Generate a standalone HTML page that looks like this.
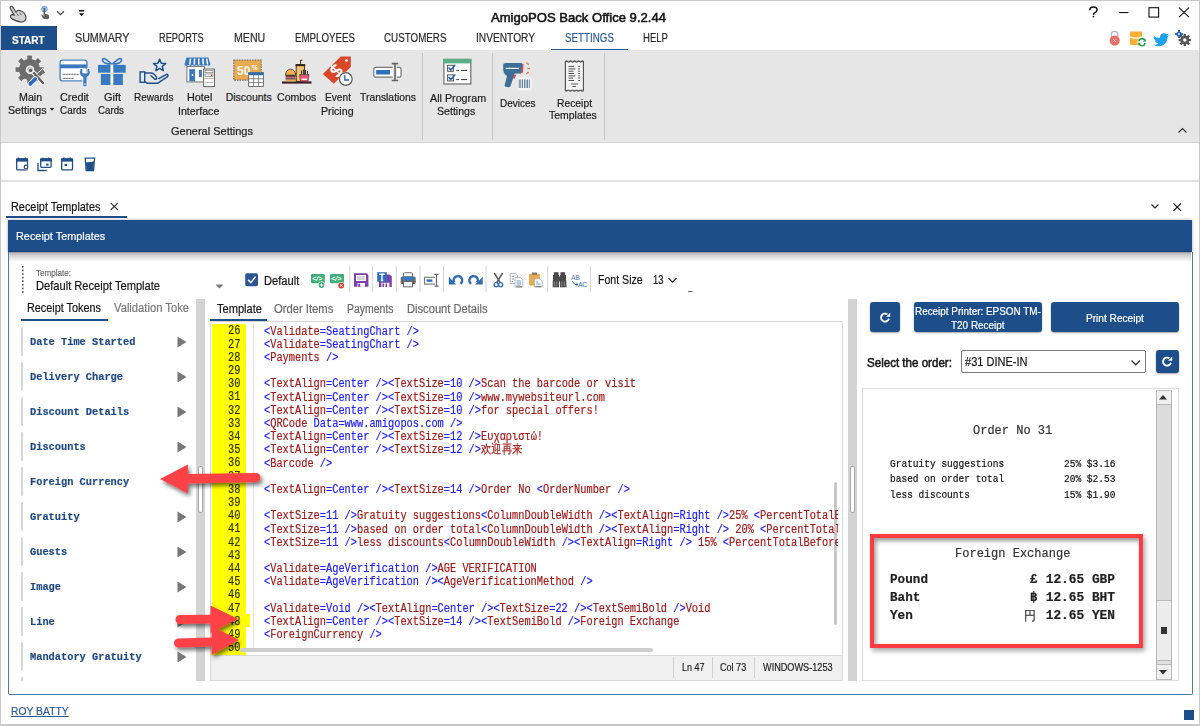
<!DOCTYPE html>
<html><head><meta charset="utf-8"><title>AmigoPOS Back Office</title>
<style>
html,body{margin:0;padding:0;}
body{width:1200px;height:726px;position:relative;overflow:hidden;background:#fff;font-family:"Liberation Sans", sans-serif;}
.t{position:absolute;white-space:pre;transform-origin:0 0;-webkit-text-stroke:0.2px currentColor;}
svg{overflow:visible}
</style></head><body>
<div style="position:absolute;left:0px;top:0px;width:1200px;height:726px;background:#fff"></div>
<div style="position:absolute;left:1px;top:26px;width:56px;height:24px;background:#1e4e89"></div>
<div style="position:absolute;left:551px;top:48.6px;width:77px;height:1.6px;background:#2b5a96"></div>
<div style="position:absolute;left:1px;top:50px;width:1198px;height:92px;background:#e6e6e6"></div>
<div style="position:absolute;left:1px;top:142px;width:1198px;height:1px;background:#d4d4d4"></div>
<div style="position:absolute;left:422px;top:53px;width:1px;height:87px;background:#c9c9c9"></div>
<div style="position:absolute;left:492px;top:53px;width:1px;height:87px;background:#c9c9c9"></div>
<div style="position:absolute;left:604px;top:53px;width:1px;height:87px;background:#c9c9c9"></div>
<div style="position:absolute;left:1px;top:180px;width:1198px;height:2px;background:#e2e2e2"></div>
<div style="position:absolute;left:6px;top:216px;width:121px;height:2px;background:#1e4e89"></div>
<div style="position:absolute;left:8px;top:220px;width:1184px;height:32px;background:#1e4e89;box-shadow:-1px 0 3px rgba(0,0,0,0.18), 1px 0 3px rgba(0,0,0,0.18);border-bottom:1px solid #0f4080;box-sizing:border-box"></div>
<div style="position:absolute;left:9px;top:252px;width:1182px;height:9.5px;background:linear-gradient(rgba(0,0,0,0.28), rgba(0,0,0,0.13) 50%, rgba(0,0,0,0))"></div>
<div style="position:absolute;left:7.5px;top:252px;width:1185px;height:442.5px;border:1.5px solid #4f78ad;border-top:none;box-sizing:border-box;border-radius:0 0 2px 2px"></div>
<div style="position:absolute;left:21px;top:319px;width:87px;height:2px;background:#1e4e89"></div>
<div style="position:absolute;left:196px;top:299px;width:9px;height:382px;background:#d3d3d3"></div>
<div style="position:absolute;left:197.6px;top:466px;width:5px;height:47px;background:#fff;border:1px solid #a8a8a8;border-radius:2px;box-sizing:border-box"></div>
<div style="position:absolute;left:21px;top:327px;width:1.5px;height:29px;background:#d6d6d6;border-radius:1px"></div>
<svg style="position:absolute;left:177px;top:336px;" width="10" height="12" viewBox="0 0 10 12"><path d="M0.5 0.5 L9.5 6 L0.5 11.5 Z" fill="#777"/></svg>
<div style="position:absolute;left:21px;top:362px;width:1.5px;height:29px;background:#d6d6d6;border-radius:1px"></div>
<svg style="position:absolute;left:177px;top:371px;" width="10" height="12" viewBox="0 0 10 12"><path d="M0.5 0.5 L9.5 6 L0.5 11.5 Z" fill="#777"/></svg>
<div style="position:absolute;left:21px;top:397px;width:1.5px;height:29px;background:#d6d6d6;border-radius:1px"></div>
<svg style="position:absolute;left:177px;top:406px;" width="10" height="12" viewBox="0 0 10 12"><path d="M0.5 0.5 L9.5 6 L0.5 11.5 Z" fill="#777"/></svg>
<div style="position:absolute;left:21px;top:432px;width:1.5px;height:29px;background:#d6d6d6;border-radius:1px"></div>
<svg style="position:absolute;left:177px;top:441px;" width="10" height="12" viewBox="0 0 10 12"><path d="M0.5 0.5 L9.5 6 L0.5 11.5 Z" fill="#777"/></svg>
<div style="position:absolute;left:21px;top:467px;width:1.5px;height:29px;background:#d6d6d6;border-radius:1px"></div>
<svg style="position:absolute;left:177px;top:476px;" width="10" height="12" viewBox="0 0 10 12"><path d="M0.5 0.5 L9.5 6 L0.5 11.5 Z" fill="#777"/></svg>
<div style="position:absolute;left:21px;top:502px;width:1.5px;height:29px;background:#d6d6d6;border-radius:1px"></div>
<svg style="position:absolute;left:177px;top:511px;" width="10" height="12" viewBox="0 0 10 12"><path d="M0.5 0.5 L9.5 6 L0.5 11.5 Z" fill="#777"/></svg>
<div style="position:absolute;left:21px;top:537px;width:1.5px;height:29px;background:#d6d6d6;border-radius:1px"></div>
<svg style="position:absolute;left:177px;top:546px;" width="10" height="12" viewBox="0 0 10 12"><path d="M0.5 0.5 L9.5 6 L0.5 11.5 Z" fill="#777"/></svg>
<div style="position:absolute;left:21px;top:572px;width:1.5px;height:29px;background:#d6d6d6;border-radius:1px"></div>
<svg style="position:absolute;left:177px;top:581px;" width="10" height="12" viewBox="0 0 10 12"><path d="M0.5 0.5 L9.5 6 L0.5 11.5 Z" fill="#777"/></svg>
<div style="position:absolute;left:21px;top:607px;width:1.5px;height:29px;background:#d6d6d6;border-radius:1px"></div>
<svg style="position:absolute;left:177px;top:616px;" width="10" height="12" viewBox="0 0 10 12"><path d="M0.5 0.5 L9.5 6 L0.5 11.5 Z" fill="#777"/></svg>
<div style="position:absolute;left:21px;top:642px;width:1.5px;height:29px;background:#d6d6d6;border-radius:1px"></div>
<svg style="position:absolute;left:177px;top:651px;" width="10" height="12" viewBox="0 0 10 12"><path d="M0.5 0.5 L9.5 6 L0.5 11.5 Z" fill="#777"/></svg>
<div style="position:absolute;left:21px;top:677px;width:1.5px;height:4px;background:#d6d6d6"></div>
<div style="position:absolute;left:210px;top:321px;width:632px;height:1px;background:#d6d6d6"></div>
<div style="position:absolute;left:210px;top:319px;width:57px;height:2px;background:#1e4e89"></div>
<div style="position:absolute;left:210px;top:321px;width:633px;height:360px;border:1px solid #dadada;border-top:none;box-sizing:border-box"></div>
<div style="position:absolute;left:212px;top:324px;width:34px;height:331px;background:#ffff00"></div>
<div style="position:absolute;left:246px;top:614px;width:4px;height:13px;background:#ffff00"></div>
<div style="position:absolute;left:253px;top:324px;width:1px;height:326px;background:#e3e3e3"></div>
<div style="position:absolute;left:211px;top:655px;width:631px;height:25px;background:#f0f0f0;border-top:1px solid #d8d8d8;box-sizing:border-box"></div>
<div style="position:absolute;left:673px;top:657px;width:1px;height:21px;background:#cfcfcf"></div>
<div style="position:absolute;left:712px;top:657px;width:1px;height:21px;background:#cfcfcf"></div>
<div style="position:absolute;left:754px;top:657px;width:1px;height:21px;background:#cfcfcf"></div>
<div style="position:absolute;left:833.5px;top:482px;width:3.3px;height:143px;background:#c8c8c8;border-radius:2px"></div>
<div style="position:absolute;left:240px;top:648px;width:413px;height:4px;background:#cdcdcd;border-radius:2px"></div>
<div style="position:absolute;left:264px;top:321px;width:574px;height:328px;overflow:hidden;font-family:&quot;Liberation Mono&quot;, monospace"><div class="t" style="left:0;top:4.51px;font-size:12px;line-height:12px;transform:scaleX(0.8610)"><span style="color:#2121ff">&lt;</span><span style="color:#a31a1a">Validate</span><span style="color:#2121ff">=SeatingChart /&gt;</span></div><div class="t" style="left:0;top:17.71px;font-size:12px;line-height:12px;transform:scaleX(0.8610)"><span style="color:#2121ff">&lt;</span><span style="color:#a31a1a">Validate</span><span style="color:#2121ff">=SeatingChart /&gt;</span></div><div class="t" style="left:0;top:30.91px;font-size:12px;line-height:12px;transform:scaleX(0.8610)"><span style="color:#2121ff">&lt;</span><span style="color:#a31a1a">Payments</span><span style="color:#2121ff"> /&gt;</span></div><div class="t" style="left:0;top:44.11px;font-size:12px;line-height:12px;transform:scaleX(0.8610)"></div><div class="t" style="left:0;top:57.31px;font-size:12px;line-height:12px;transform:scaleX(0.8610)"><span style="color:#2121ff">&lt;</span><span style="color:#a31a1a">TextAlign</span><span style="color:#2121ff">=Center /&gt;</span><span style="color:#2121ff">&lt;</span><span style="color:#a31a1a">TextSize</span><span style="color:#2121ff">=10 /&gt;</span><span style="color:#a31a1a">Scan the barcode or visit</span></div><div class="t" style="left:0;top:70.51px;font-size:12px;line-height:12px;transform:scaleX(0.8610)"><span style="color:#2121ff">&lt;</span><span style="color:#a31a1a">TextAlign</span><span style="color:#2121ff">=Center /&gt;</span><span style="color:#2121ff">&lt;</span><span style="color:#a31a1a">TextSize</span><span style="color:#2121ff">=10 /&gt;</span><span style="color:#a31a1a">www.mywebsiteurl.com</span></div><div class="t" style="left:0;top:83.71px;font-size:12px;line-height:12px;transform:scaleX(0.8610)"><span style="color:#2121ff">&lt;</span><span style="color:#a31a1a">TextAlign</span><span style="color:#2121ff">=Center /&gt;</span><span style="color:#2121ff">&lt;</span><span style="color:#a31a1a">TextSize</span><span style="color:#2121ff">=10 /&gt;</span><span style="color:#a31a1a">for special offers!</span></div><div class="t" style="left:0;top:96.91px;font-size:12px;line-height:12px;transform:scaleX(0.8610)"><span style="color:#2121ff">&lt;</span><span style="color:#a31a1a">QRCode</span><span style="color:#2121ff"> Data=www.amigopos.com /&gt;</span></div><div class="t" style="left:0;top:110.11px;font-size:12px;line-height:12px;transform:scaleX(0.8610)"><span style="color:#2121ff">&lt;</span><span style="color:#a31a1a">TextAlign</span><span style="color:#2121ff">=Center /&gt;</span><span style="color:#2121ff">&lt;</span><span style="color:#a31a1a">TextSize</span><span style="color:#2121ff">=12 /&gt;</span><span style="color:#a31a1a">Ευχαριστώ!</span></div><div class="t" style="left:0;top:123.31px;font-size:12px;line-height:12px;transform:scaleX(0.8610)"><span style="color:#2121ff">&lt;</span><span style="color:#a31a1a">TextAlign</span><span style="color:#2121ff">=Center /&gt;</span><span style="color:#2121ff">&lt;</span><span style="color:#a31a1a">TextSize</span><span style="color:#2121ff">=12 /&gt;</span><span style="color:#a31a1a">欢迎再来</span></div><div class="t" style="left:0;top:136.51px;font-size:12px;line-height:12px;transform:scaleX(0.8610)"><span style="color:#2121ff">&lt;</span><span style="color:#a31a1a">Barcode</span><span style="color:#2121ff"> /&gt;</span></div><div class="t" style="left:0;top:149.71px;font-size:12px;line-height:12px;transform:scaleX(0.8610)"></div><div class="t" style="left:0;top:162.91px;font-size:12px;line-height:12px;transform:scaleX(0.8610)"><span style="color:#2121ff">&lt;</span><span style="color:#a31a1a">TextAlign</span><span style="color:#2121ff">=Center /&gt;</span><span style="color:#2121ff">&lt;</span><span style="color:#a31a1a">TextSize</span><span style="color:#2121ff">=14 /&gt;</span><span style="color:#a31a1a">Order No </span><span style="color:#2121ff">&lt;</span><span style="color:#a31a1a">OrderNumber</span><span style="color:#2121ff"> /&gt;</span></div><div class="t" style="left:0;top:176.11px;font-size:12px;line-height:12px;transform:scaleX(0.8610)"></div><div class="t" style="left:0;top:189.31px;font-size:12px;line-height:12px;transform:scaleX(0.8610)"><span style="color:#2121ff">&lt;</span><span style="color:#a31a1a">TextSize</span><span style="color:#2121ff">=11 /&gt;</span><span style="color:#a31a1a">Gratuity suggestions</span><span style="color:#2121ff">&lt;</span><span style="color:#a31a1a">ColumnDoubleWidth</span><span style="color:#2121ff"> /&gt;</span><span style="color:#2121ff">&lt;</span><span style="color:#a31a1a">TextAlign</span><span style="color:#2121ff">=Right /&gt;</span><span style="color:#a31a1a">25% </span><span style="color:#2121ff">&lt;</span><span style="color:#a31a1a">PercentTotalBefore</span><span style="color:#2121ff"></span></div><div class="t" style="left:0;top:202.51px;font-size:12px;line-height:12px;transform:scaleX(0.8610)"><span style="color:#2121ff">&lt;</span><span style="color:#a31a1a">TextSize</span><span style="color:#2121ff">=11 /&gt;</span><span style="color:#a31a1a">based on order total</span><span style="color:#2121ff">&lt;</span><span style="color:#a31a1a">ColumnDoubleWidth</span><span style="color:#2121ff"> /&gt;</span><span style="color:#2121ff">&lt;</span><span style="color:#a31a1a">TextAlign</span><span style="color:#2121ff">=Right /&gt;</span><span style="color:#a31a1a"> 20% </span><span style="color:#2121ff">&lt;</span><span style="color:#a31a1a">PercentTotalBefore</span><span style="color:#2121ff"></span></div><div class="t" style="left:0;top:215.71px;font-size:12px;line-height:12px;transform:scaleX(0.8610)"><span style="color:#2121ff">&lt;</span><span style="color:#a31a1a">TextSize</span><span style="color:#2121ff">=11 /&gt;</span><span style="color:#a31a1a">less discounts</span><span style="color:#2121ff">&lt;</span><span style="color:#a31a1a">ColumnDoubleWidth</span><span style="color:#2121ff"> /&gt;</span><span style="color:#2121ff">&lt;</span><span style="color:#a31a1a">TextAlign</span><span style="color:#2121ff">=Right /&gt;</span><span style="color:#a31a1a"> 15% </span><span style="color:#2121ff">&lt;</span><span style="color:#a31a1a">PercentTotalBefore</span><span style="color:#2121ff"></span></div><div class="t" style="left:0;top:228.91px;font-size:12px;line-height:12px;transform:scaleX(0.8610)"></div><div class="t" style="left:0;top:242.11px;font-size:12px;line-height:12px;transform:scaleX(0.8610)"><span style="color:#2121ff">&lt;</span><span style="color:#a31a1a">Validate</span><span style="color:#2121ff">=AgeVerification /&gt;</span><span style="color:#a31a1a">AGE VERIFICATION</span></div><div class="t" style="left:0;top:255.31px;font-size:12px;line-height:12px;transform:scaleX(0.8610)"><span style="color:#2121ff">&lt;</span><span style="color:#a31a1a">Validate</span><span style="color:#2121ff">=AgeVerification /&gt;</span><span style="color:#2121ff">&lt;</span><span style="color:#a31a1a">AgeVerificationMethod</span><span style="color:#2121ff"> /&gt;</span></div><div class="t" style="left:0;top:268.51px;font-size:12px;line-height:12px;transform:scaleX(0.8610)"></div><div class="t" style="left:0;top:281.71px;font-size:12px;line-height:12px;transform:scaleX(0.8610)"><span style="color:#2121ff">&lt;</span><span style="color:#a31a1a">Validate</span><span style="color:#2121ff">=Void /&gt;</span><span style="color:#2121ff">&lt;</span><span style="color:#a31a1a">TextAlign</span><span style="color:#2121ff">=Center /&gt;</span><span style="color:#2121ff">&lt;</span><span style="color:#a31a1a">TextSize</span><span style="color:#2121ff">=22 /&gt;</span><span style="color:#2121ff">&lt;</span><span style="color:#a31a1a">TextSemiBold</span><span style="color:#2121ff"> /&gt;</span><span style="color:#a31a1a">Void</span></div><div class="t" style="left:0;top:294.91px;font-size:12px;line-height:12px;transform:scaleX(0.8610)"><span style="color:#2121ff">&lt;</span><span style="color:#a31a1a">TextAlign</span><span style="color:#2121ff">=Center /&gt;</span><span style="color:#2121ff">&lt;</span><span style="color:#a31a1a">TextSize</span><span style="color:#2121ff">=14 /&gt;</span><span style="color:#2121ff">&lt;</span><span style="color:#a31a1a">TextSemiBold</span><span style="color:#2121ff"> /&gt;</span><span style="color:#a31a1a">Foreign Exchange</span></div><div class="t" style="left:0;top:308.11px;font-size:12px;line-height:12px;transform:scaleX(0.8610)"><span style="color:#2121ff">&lt;</span><span style="color:#a31a1a">ForeignCurrency</span><span style="color:#2121ff"> /&gt;</span></div><div class="t" style="left:0;top:321.31px;font-size:12px;line-height:12px;transform:scaleX(0.8610)"></div></div>
<div style="position:absolute;left:848px;top:299px;width:9px;height:382px;background:#d3d3d3"></div>
<div style="position:absolute;left:849.5px;top:466px;width:5px;height:47px;background:#fff;border:1px solid #a8a8a8;border-radius:2px;box-sizing:border-box"></div>
<div style="position:absolute;left:870px;top:302px;width:30px;height:30px;background:#1e4e89;border-radius:3px;box-shadow:0 1px 2px rgba(0,0,0,0.35)"></div>
<div style="position:absolute;left:914px;top:302px;width:128px;height:30px;background:#1e4e89;border-radius:3px;box-shadow:0 1px 2px rgba(0,0,0,0.35)"></div>
<div style="position:absolute;left:1051px;top:302px;width:128px;height:30px;background:#1e4e89;border-radius:3px;box-shadow:0 1px 2px rgba(0,0,0,0.35)"></div>
<div style="position:absolute;left:961px;top:350px;width:185px;height:23px;background:#fff;border:1px solid #7a7a7a;box-sizing:border-box;border-radius:2px"></div>
<svg style="position:absolute;left:1131px;top:360px;" width="10" height="6" viewBox="0 0 10 6"><path d="M0.5 0.5 L4.75 4.75 L9 0.5" fill="none" stroke="#333" stroke-width="1.3"/></svg>
<div style="position:absolute;left:1156px;top:350px;width:23px;height:23px;background:#1e4e89;border-radius:3px;box-shadow:0 1px 2px rgba(0,0,0,0.35)"></div>
<div style="position:absolute;left:862px;top:388px;width:317px;height:293px;border:1px solid #dcdcdc;box-sizing:border-box;background:#fff"></div>
<div style="position:absolute;left:1156px;top:390px;width:16px;height:290px;background:#dcdcdc;border:1px solid #b9b9b9;box-sizing:border-box"></div>
<div style="position:absolute;left:1156px;top:390px;width:16px;height:15px;background:#f0f0f0;border:1px solid #b9b9b9;box-sizing:border-box"></div>
<svg style="position:absolute;left:1159px;top:395px;" width="8" height="5" viewBox="0 0 8 5"><path d="M0 4.5 L4 0 L8 4.5 Z" fill="#333"/></svg>
<div style="position:absolute;left:1156px;top:600px;width:16px;height:61px;background:#ececec;border:1px solid #b9b9b9;box-sizing:border-box"></div>
<div style="position:absolute;left:1161px;top:627px;width:6px;height:7px;background:#333"></div>
<div style="position:absolute;left:1156px;top:660px;width:16px;height:5px;background:#e0e0e0;border:1px solid #b9b9b9;box-sizing:border-box"></div>
<div style="position:absolute;left:1156px;top:664px;width:16px;height:16px;background:#f0f0f0;border:1px solid #b9b9b9;box-sizing:border-box"></div>
<svg style="position:absolute;left:1159px;top:670px;" width="8" height="5" viewBox="0 0 8 5"><path d="M0 0 L4 4.5 L8 0 Z" fill="#333"/></svg>
<div style="position:absolute;left:870px;top:534px;width:273px;height:114px;border:4px solid #fd3b40;box-sizing:border-box;box-shadow:2px 3px 5px rgba(0,0,0,0.35), inset 2px 3px 4px rgba(0,0,0,0.4)"></div>
<div style="position:absolute;left:1184px;top:710px;width:10px;height:10px;background:#1e4e89"></div>
<svg style="position:absolute;left:5px;top:2px;" width="30" height="24" viewBox="0 0 30 24">
<path d="M5.2 6.2 C4.8 4.4 6.8 3.6 7.8 5 L11 10.2 C11.8 8.7 13.6 8.1 15.6 8.7 C18.2 9.5 20.2 11.8 20.9 14.9 C21.5 17.9 19.5 20.1 16.2 20.1 C13 19.9 10 18.5 7.1 16.9 C5 15.9 4.8 13.6 6.4 12.9 C7.5 12.4 8.6 12.8 9.3 13.4 Z" fill="#d2d2d2" stroke="#484848" stroke-width="1.2" stroke-linejoin="round"/>
<path d="M11.8 11.6 L13.6 14 M14.6 10.6 L16.4 13.2" stroke="#555" stroke-width="0.9"/></svg>
<svg style="position:absolute;left:35px;top:2px;" width="55" height="24" viewBox="0 0 55 24">
<circle cx="9.4" cy="7" r="2.9" fill="#9cc3ea" stroke="#6aa2dc" stroke-width="0.8"/>
<path d="M9.4 6.5 V13" stroke="#555" stroke-width="1.6" stroke-linecap="round"/>
<path d="M6 12.3 L9.4 14 V12 C11 11.6 13.5 12.2 14 13.5 C14.6 15.5 14 17 12.6 17.2 L9.5 17 C8.2 16.5 7 15 6 12.3 Z" fill="#626262"/>
<path d="M22 9.3 L25.5 12.7 L29 9.3" fill="none" stroke="#444" stroke-width="1.2"/>
<rect x="44" y="8" width="5.2" height="1.6" fill="#222"/>
<path d="M44 11.3 H49.2 L46.6 14.3 Z" fill="#111"/></svg>
<svg style="position:absolute;left:1085px;top:4px;" width="112" height="18" viewBox="0 0 112 18">
<path d="M4.8 6.2 C4.8 3.8 6.5 3 8.4 3 C10.5 3 12 4.2 12 6 C12 7.6 10.8 8.3 9.6 8.9 C8.7 9.4 8.5 9.9 8.5 10.9" fill="none" stroke="#111" stroke-width="1.5"/>
<circle cx="8.5" cy="12.6" r="0.95" fill="#111"/>
<rect x="33.8" y="8" width="9.5" height="1.1" fill="#111"/>
<rect x="64" y="3.7" width="9.6" height="9.4" fill="none" stroke="#111" stroke-width="1.1"/>
<path d="M94 3.7 L104 13.2 M104 3.7 L94 13.2" stroke="#111" stroke-width="1.1"/></svg>
<svg style="position:absolute;left:1105px;top:28px;" width="95" height="20" viewBox="0 0 95 20">
<path d="M6.4 9 V5.7 C6.4 3.8 7.8 3.4 9.6 3.4 C11.4 3.4 12.8 3.8 12.8 5.7 V9" fill="none" stroke="#b9b9b9" stroke-width="1.3"/>
<circle cx="9.7" cy="12.6" r="5.1" fill="#ea6f68"/>
<path d="M8.2 11.1 L11.2 14.1 M11.2 11.1 L8.2 14.1" stroke="#fbd3d0" stroke-width="0.9"/>
<path d="M25 3.4 H37 V9 C34 10.5 28 10.5 25 9 Z" fill="#fbb033"/>
<path d="M25 9.8 C28 11.2 34 11.2 37 9.8 V17 H25 Z" fill="#fbb033"/>
<path d="M25.2 8.7 C28.6 10.2 33.6 10.2 36.8 8.7" stroke="#fff" stroke-width="0.8" fill="none"/>
<circle cx="37" cy="14.2" r="4.6" fill="#fff"/>
<path d="M34 13.4 A3 3 0 0 1 39.8 12.6 M40 15 A3 3 0 0 1 34.2 15.8" fill="none" stroke="#1a9c4a" stroke-width="1.6"/>
<path d="M40.8 10.8 V13.6 H38 Z M33.2 17.6 V14.8 H36 Z" fill="#1a9c4a"/>
<path d="M48.5 7.5 C50.5 9.2 52.5 10 55 10 C54.6 7.5 56.5 5.3 58.8 5.3 C60 5.3 60.9 5.8 61.6 6.5 C62.5 6.3 63.2 6 63.8 5.6 C63.5 6.5 63 7.2 62.3 7.7 C63 7.6 63.6 7.4 64.2 7.2 C63.7 7.9 63.2 8.4 62.6 8.9 C62.7 13.8 59 18.2 53.5 18.2 C51.5 18.2 49.7 17.6 48.3 16.7 C50.3 16.8 52 16.3 53.3 15.2 C51.5 15.1 50.3 14.2 49.8 12.8 C50.4 12.9 51 12.9 51.5 12.7 C49.8 12.2 48.6 10.8 48.6 9 C49.2 9.3 49.7 9.4 50.3 9.5 C49.2 8.8 48.5 7.9 48.5 7.5 Z" fill="#1da1f2"/>
<g fill="#1f5fb4"><circle cx="74" cy="6" r="2.6"/><rect x="73.1" y="2" width="1.8" height="8"/><rect x="70" y="5.1" width="8" height="1.8"/></g>
<circle cx="74" cy="6" r="1" fill="#fff"/>
<g fill="#555" transform="translate(79.8 12)"><circle r="4.4"/>
<rect x="-1.2" y="-6.2" width="2.4" height="12.4"/><rect x="-6.2" y="-1.2" width="12.4" height="2.4"/>
<rect x="-1.2" y="-6.2" width="2.4" height="12.4" transform="rotate(45)"/><rect x="-6.2" y="-1.2" width="12.4" height="2.4" transform="rotate(45)"/></g>
<circle cx="79.8" cy="12" r="1.8" fill="#fff"/></svg>
<svg style="position:absolute;left:12px;top:52px;" width="40" height="40" viewBox="0 0 40 40">
<g transform="translate(17.6 17.6)" fill="#6d6d6d">
<circle r="10.6"/>
<g id="tth"><rect x="-2.3" y="-14" width="4.6" height="28"/></g>
<use href="#tth" transform="rotate(45)"/><use href="#tth" transform="rotate(90)"/><use href="#tth" transform="rotate(135)"/>
</g>

<path d="M19 18 L31 31" stroke="#fff" stroke-width="4.4" stroke-linecap="round"/>
<path d="M19 18 L31 31" stroke="#5d5d5d" stroke-width="2.4" stroke-linecap="round"/>
<circle cx="18" cy="17.8" r="3.6" fill="#c9c9c9" stroke="#fff" stroke-width="1.3"/><circle cx="18.6" cy="18.4" r="1.6" fill="#5d5d5d"/>
<path d="M24.5 22 L31 16.5 L33.5 20.5 L28.5 24.5" fill="#6d6d6d" stroke="#fff" stroke-width="0.9"/>
<path d="M18.3 32 L23.3 27" stroke="#fff" stroke-width="5.4" stroke-linecap="round"/>
<path d="M18.3 32 L23.3 27" stroke="#2a6cc0" stroke-width="3.8" stroke-linecap="round"/></svg>
<svg style="position:absolute;left:55px;top:52px;" width="40" height="40" viewBox="0 0 40 40">
<rect x="5.1" y="8.1" width="26.8" height="20.8" rx="2.4" fill="#fff" stroke="#4c86c6" stroke-width="1.4"/>
<rect x="5.1" y="12.4" width="26.8" height="3.9" fill="#3c79bf"/>
<path d="M7.5 22.3 H24 M7.5 26.4 H19" stroke="#555" stroke-width="1" stroke-dasharray="1.2 0.4"/>
<path d="M25 18 A5.2 5.2 0 0 0 27.8 25.2 V34.8 H32 V25.2 A5.2 5.2 0 0 0 34.8 18 V16.4 H32 V21 H27.8 V16.4 H25 Z" fill="#3c79bf" stroke="#fff" stroke-width="0.9"/>
<rect x="29.3" y="31.4" width="1.3" height="1.3" fill="#fff"/></svg>
<svg style="position:absolute;left:92px;top:52px;" width="40" height="40" viewBox="0 0 40 40">
<path d="M19.8 12.2 C16 8.5 11 4.5 10.5 7.5 C10 10.5 14.5 12.3 19.8 12.2 Z M20.2 12.2 C24 8.5 29 4.5 29.5 7.5 C30 10.5 25.5 12.3 20.2 12.2 Z" fill="none" stroke="#3a78bf" stroke-width="1.6"/>
<rect x="6" y="12.9" width="27.7" height="7.8" fill="#3a78bf"/>
<rect x="8.8" y="22" width="22.1" height="11" fill="#3a78bf"/>
<rect x="18.5" y="12.5" width="2.8" height="21" fill="#fff"/></svg>
<svg style="position:absolute;left:134px;top:52px;" width="40" height="40" viewBox="0 0 40 40">
<path d="M25.6 7.2 L27.3 11.2 L31.6 11.6 L28.3 14.4 L29.3 18.6 L25.6 16.4 L21.9 18.6 L22.9 14.4 L19.6 11.6 L23.9 11.2 Z" fill="#d8ecfb" stroke="#1f4e89" stroke-width="1.5" stroke-linejoin="round"/>
<rect x="6.1" y="19.9" width="4.6" height="10.4" fill="#d8ecfb" stroke="#1f4e89" stroke-width="1.4"/>
<path d="M10.8 21 H17 C19 21 21.5 23.5 22.6 25.5 C23.2 26.8 21.6 27.8 20.4 26.8 L17 23.8" fill="none" stroke="#1f4e89" stroke-width="1.5" stroke-linecap="round" stroke-linejoin="round"/>
<path d="M10.8 29.5 L13.5 31.3 H23.5 L33.6 24.6 C34.6 23.6 33.6 21.8 32 22.6 L24.8 26.6" fill="none" stroke="#1f4e89" stroke-width="1.5" stroke-linecap="round" stroke-linejoin="round"/></svg>
<svg style="position:absolute;left:180px;top:52px;" width="40" height="40" viewBox="0 0 40 40">
<rect x="6.9" y="14.5" width="17.5" height="15.4" fill="#fff" stroke="#777" stroke-width="1"/>
<rect x="9.3" y="17.2" width="5.7" height="12" fill="#3a78bf"/><circle cx="12.6" cy="23" r="0.9" fill="#fff"/>
<rect x="19" y="18" width="2.9" height="7" fill="#3a78bf"/>
<path d="M6.5 5.5 H28.3 L30.5 12.6 C29.5 14.2 28 14.2 27 12.8 C26 14.2 24.4 14.2 23.4 12.8 C22.4 14.2 20.8 14.2 19.8 12.8 C18.8 14.2 17.2 14.2 16.2 12.8 C15.2 14.2 13.6 14.2 12.6 12.8 C11.6 14.2 10 14.2 9 12.8 C8 14.2 5.4 14.2 4.4 12.6 Z" fill="#3a78bf"/>
<path d="M10.5 6.5 L9.8 12.5 M14.6 6.5 L14.3 12.5 M18.7 6.5 L18.8 12.5 M22.8 6.5 L23.3 12.5 M26.6 6.5 L27.6 12.5" stroke="#fff" stroke-width="1.5"/>
<rect x="23.6" y="17" width="10.9" height="17.6" fill="#fff" stroke="#666" stroke-width="1"/>
<rect x="25" y="18.5" width="8" height="2.2" fill="none" stroke="#777" stroke-width="0.7"/>
<rect x="25" y="22" width="8" height="2.5" fill="none" stroke="#777" stroke-width="0.7"/><circle cx="31.5" cy="23.2" r="0.7" fill="#e02020"/>
<path d="M24.5 26.5 H33.6" stroke="#888" stroke-width="0.6"/>
<path d="M25.3 31 L26.3 30 L27.3 31 L28.3 30 L29.3 31 L30.3 30 L31.3 31 L32.3 30 L33 31" fill="none" stroke="#777" stroke-width="0.6"/></svg>
<svg style="position:absolute;left:229px;top:52px;" width="40" height="40" viewBox="0 0 40 40">
<rect x="4.8" y="8" width="27.4" height="20.1" fill="#eaaa50" stroke="#6e6e6e" stroke-width="1.1" stroke-dasharray="1.6 1"/>
<text x="8" y="22.8" font-family="Liberation Sans, sans-serif" font-weight="700" font-size="12" fill="#fff">50</text>
<text x="23" y="17.5" font-family="Liberation Sans, sans-serif" font-weight="700" font-size="6.5" fill="#fff">%</text>
<rect x="19.6" y="20.6" width="14.8" height="13.8" fill="#fff" stroke="#6e6e6e" stroke-width="1"/>
<rect x="19.6" y="20.6" width="14.8" height="2.6" fill="#2d6bb8"/>
<path d="M24.6 23 V34.4 M29.6 23 V34.4 M19.6 26.8 H34.4 M19.6 30.6 H34.4" stroke="#777" stroke-width="0.9"/></svg>
<svg style="position:absolute;left:277px;top:52px;" width="40" height="40" viewBox="0 0 40 40">
<rect x="5" y="29.4" width="29.5" height="2.2" fill="#3a1f2c"/>
<rect x="19.2" y="13.2" width="8.4" height="16.2" fill="#f2c36e" stroke="#3a2a20" stroke-width="0.9"/>
<rect x="18.6" y="12" width="9.6" height="2.2" fill="#3a2a20"/>
<path d="M23.6 12 V8.2 H25.4" fill="none" stroke="#3a2a20" stroke-width="1"/>
<path d="M8.6 23.2 C8.6 19.5 10.8 17.2 13.6 17.2 C16.4 17.2 18.6 19.5 18.6 23.2 Z" fill="#f0b050" stroke="#3a2a20" stroke-width="0.8"/>
<rect x="8.6" y="23.2" width="10" height="1.6" fill="#3a2a20"/>
<rect x="8.6" y="24.8" width="10" height="1.6" fill="#d4577a"/>
<rect x="8.6" y="26.4" width="10" height="1.2" fill="#3a2a20"/>
<rect x="8.6" y="27.6" width="10" height="1.8" fill="#e9a94e"/>
<path d="M24.5 22.5 V18.5 M26.5 22.5 V17.5 M28.5 22.5 V18 M30.5 22.5 V19" stroke="#3a3a3a" stroke-width="1.1"/>
<path d="M22.6 22.6 H32 L31 29.4 H23.6 Z" fill="#e45a7a" stroke="#3a2a20" stroke-width="0.6"/>
<rect x="24.5" y="26.6" width="5.5" height="1.4" fill="#fff"/></svg>
<svg style="position:absolute;left:318px;top:52px;" width="40" height="40" viewBox="0 0 40 40">
<path d="M4.8 22 L22.8 4.6 H32.8 V15 L15.8 31.8 Z" fill="#d9472b"/>
<circle cx="28.4" cy="8.6" r="1.4" fill="#e8f4f8"/>
<g transform="translate(18.3 18.6) rotate(-45)" fill="none" stroke="#fff" stroke-width="2.1"><path d="M3.6 -3.3 C3.2 -5.4 -3.6 -5.8 -3.6 -2.4 C-3.6 0.6 3.6 -0.5 3.6 2.8 C3.6 6 -3.2 5.8 -3.9 3.4"/><path d="M0 -7.2 V7.2" stroke-width="1.6"/></g>
<circle cx="27.8" cy="27" r="7.2" fill="#fff"/>
<circle cx="27.8" cy="27" r="6.4" fill="#fff" stroke="#555" stroke-width="1.2"/>
<path d="M26.8 23.2 V28 H31" fill="none" stroke="#1f5fb4" stroke-width="1.3"/></svg>
<svg style="position:absolute;left:367px;top:52px;" width="40" height="40" viewBox="0 0 40 40">
<rect x="6.8" y="15.3" width="27.2" height="9.8" rx="1.6" fill="#fff" stroke="#777" stroke-width="1.2"/>
<rect x="9.1" y="18" width="13.9" height="4.5" fill="#2f6fbf"/>
<rect x="25.6" y="13" width="4.2" height="14" fill="#e6e6e6"/>
<path d="M24.8 11.6 H31.2 M28 11.6 V28.5 M24.8 28.5 H31.2" stroke="#666" stroke-width="1.6"/></svg>
<svg style="position:absolute;left:437px;top:52px;" width="40" height="40" viewBox="0 0 40 40">
<rect x="6.9" y="7.4" width="26.9" height="24.6" fill="#fff" stroke="#6d6d6d" stroke-width="1.2"/>
<rect x="6.3" y="6.9" width="28" height="4.5" fill="#5aaf86"/>
<rect x="10.6" y="13.3" width="5.8" height="6" fill="none" stroke="#555" stroke-width="1"/>
<rect x="10.6" y="22.9" width="5.8" height="6" fill="none" stroke="#555" stroke-width="1"/>
<path d="M12 16 L13.8 18 L17.8 13.3 M12 25.6 L13.8 27.6 L17.8 22.9" fill="none" stroke="#1f63b8" stroke-width="1.6" stroke-linecap="round"/>
<path d="M19.3 18.4 H22 M24 18.4 H30 M19.3 27.6 H22 M24 27.6 H30" stroke="#333" stroke-width="1"/></svg>
<svg style="position:absolute;left:497px;top:55px;" width="40" height="40" viewBox="0 0 40 40">
<rect x="20.6" y="22.2" width="14" height="13.2" fill="#f4f4f4"/>
<path d="M22.3 24.5 V33 M23.8 24.5 V33 M25.5 24.5 V33 M27.5 24.5 V33 M29 24.5 V33 M30.5 24.5 V33 M32.3 24.5 V33" stroke="#58789a" stroke-width="0.9"/>
<path d="M15 20 L19.5 19.5 L17.5 23.5 L14.5 23.5 Z" fill="#e04a5a"/>
<path d="M23 8.6 L26.6 9.2 L26 17.6 L23 18.4 Z" fill="#e04a5a"/>
<path d="M6.2 10.2 C6.2 8.6 7.2 8 9 7.9 L24.2 8 C25 8 25.4 8.6 25.2 9.5 L24.3 17 C24.2 18 23.6 18.5 22.6 18.5 L17.6 18.6 L13.6 31 C13.2 32 12.4 32.4 11.5 32.2 L8.8 31.8 C7.8 31.6 7.4 30.6 7.8 29.6 L10 21 C8 20 6.2 17 6.2 15 Z" fill="#3d6e98"/>
<path d="M9.2 13.3 H21.5" stroke="#f0f0f0" stroke-width="1.3" stroke-linecap="round"/>
<path d="M29.8 8 L31.2 9.2 M31 13.5 H32.5 M29.8 18.5 L31.2 17.5" stroke="#e2784a" stroke-width="1.4" stroke-linecap="round"/></svg>
<svg style="position:absolute;left:555px;top:56px;" width="40" height="40" viewBox="0 0 40 40">
<path d="M10.5 5.5 Q11.5 4.5 12.5 5.5 T14.5 5.5 T16.5 5.5 T18.5 5.5 T20.5 5.5 T22.5 5.5 T24.5 5.5 T26.5 5.5 T28.3 5.5 V34.5 Q27.3 35.5 26.3 34.5 T24.3 34.5 T22.3 34.5 T20.3 34.5 T18.3 34.5 T16.3 34.5 T14.3 34.5 T12.3 34.5 T10.5 34.5 Z" fill="#fff" stroke="#555" stroke-width="1.4"/>
<rect x="11.2" y="7" width="16.4" height="26.5" fill="#f4f4f4"/>
<path d="M13.5 10.4 H19 M13.5 12.9 H20.5 M13.5 15.2 H18.5 M13.5 17.5 H19 M13.5 19.9 H20.5 M13.5 22.2 H18 M13.5 24.5 H19 M23.2 10.4 H25 M23.2 12.9 H25 M23.2 15.2 H25 M23.2 17.5 H25 M23.2 19.9 H25 M23.2 22.2 H25 M23.2 24.5 H25" stroke="#555" stroke-width="1"/>
<path d="M16 28 H23 M17.5 30.5 H21" stroke="#555" stroke-width="1.1"/></svg>
<svg style="position:absolute;left:49px;top:107px;" width="6" height="5" viewBox="0 0 6 5"><path d="M0.8 1 H5.2 L3 3.8 Z" fill="#222"/></svg>
<svg style="position:absolute;left:1177px;top:126px;" width="12" height="8" viewBox="0 0 12 8"><path d="M1.5 6.5 L5.5 2.5 L9.5 6.5" fill="none" stroke="#333" stroke-width="1.2"/></svg>
<svg style="position:absolute;left:12px;top:152px;" width="90" height="25" viewBox="0 0 90 25">
<rect x="4.7" y="7" width="10.8" height="10.9" rx="1" fill="none" stroke="#1f4e89" stroke-width="1.3"/>
<rect x="4.1" y="6.4" width="12" height="3.2" fill="#1f4e89"/>
<path d="M6.6 5.4 V7.5 M13.4 5.4 V7.5" stroke="#1f4e89" stroke-width="1.3"/>
<circle cx="14" cy="15" r="2.6" fill="#fff"/><circle cx="14" cy="15" r="1.8" fill="none" stroke="#1f4e89" stroke-width="1.2"/>
<path d="M26 11 V18.5 H34.7" fill="none" stroke="#1f4e89" stroke-width="1.3"/>
<rect x="28.7" y="7" width="10.4" height="8.3" rx="1" fill="none" stroke="#1f4e89" stroke-width="1.3"/>
<rect x="28.1" y="6.4" width="11.6" height="3" fill="#1f4e89"/>
<path d="M31 5.4 V7.5 M36.6 5.4 V7.5" stroke="#1f4e89" stroke-width="1.3"/>
<rect x="34.2" y="11.6" width="2.4" height="2" fill="#1f4e89"/>
<rect x="49.7" y="7" width="10.8" height="10.9" rx="1" fill="none" stroke="#1f4e89" stroke-width="1.3"/>
<rect x="49.1" y="6.4" width="12" height="3.2" fill="#1f4e89"/>
<path d="M51.8 5.4 V7.5 M58.4 5.4 V7.5" stroke="#1f4e89" stroke-width="1.3"/>
<rect x="52.6" y="12" width="2.4" height="2" fill="#1f4e89"/>
<path d="M73.2 6.2 H82.6 L81.5 18.7 H74.2 Z" fill="none" stroke="#1f4e89" stroke-width="1.3"/>
<path d="M74 10.6 C76 9.8 79 10.6 82 9.3 L81.3 18.5 H74.5 Z" fill="#1f4e89"/></svg>
<svg style="position:absolute;left:108px;top:200px;" width="14" height="14" viewBox="0 0 14 14"><path d="M2.6 2.8 L10 10 M10 2.8 L2.6 10" stroke="#333" stroke-width="1.1"/></svg>
<svg style="position:absolute;left:1148px;top:200px;" width="40" height="14" viewBox="0 0 40 14"><path d="M3.5 4.5 L7 8 L10.5 4.5" fill="none" stroke="#222" stroke-width="1.2"/><path d="M25.5 3.3 L33 10.8 M33 3.3 L25.5 10.8" stroke="#111" stroke-width="1.2"/></svg>
<svg style="position:absolute;left:20px;top:264px;" width="6" height="32" viewBox="0 0 6 32"><rect x="2" y="2.0" width="1.6" height="1.6" fill="#555"/><rect x="2" y="5.6" width="1.6" height="1.6" fill="#555"/><rect x="2" y="9.2" width="1.6" height="1.6" fill="#555"/><rect x="2" y="12.8" width="1.6" height="1.6" fill="#555"/><rect x="2" y="16.4" width="1.6" height="1.6" fill="#555"/><rect x="2" y="20.0" width="1.6" height="1.6" fill="#555"/><rect x="2" y="23.6" width="1.6" height="1.6" fill="#555"/><rect x="2" y="27.2" width="1.6" height="1.6" fill="#555"/></svg>
<svg style="position:absolute;left:214px;top:282px;" width="12" height="8" viewBox="0 0 12 8"><path d="M1.5 2.5 H9.5 L5.5 6.5 Z" fill="#777"/></svg>
<svg style="position:absolute;left:240px;top:266px;" width="460" height="30" viewBox="0 0 460 30">
<rect x="5.2" y="7.3" width="12.8" height="12.9" rx="1.6" fill="#2c5592"/>
<path d="M8 13.8 L10.8 16.6 L15.6 10.6" fill="none" stroke="#fff" stroke-width="1.5"/>
<rect x="71" y="8" width="13.8" height="9.2" rx="1.2" fill="#3fae7b"/>
<text x="72.2" y="15.2" font-family="Liberation Mono, monospace" font-weight="700" font-size="7" fill="#fff" letter-spacing="-1.2">&lt;/&gt;</text>
<circle cx="81.5" cy="19" r="3.6" fill="#fff"/><circle cx="81.5" cy="19" r="2.9" fill="#3fae7b"/>
<path d="M79.8 19 H83.2 M81.5 17.3 V20.7" stroke="#fff" stroke-width="1.1"/>
<rect x="90" y="8" width="14" height="9.2" rx="1.2" fill="#3fae7b"/>
<text x="91.2" y="15.2" font-family="Liberation Mono, monospace" font-weight="700" font-size="7" fill="#fff" letter-spacing="-1.2">&lt;/&gt;</text>
<circle cx="101.2" cy="19.5" r="3.6" fill="#fff"/><circle cx="101.2" cy="19.5" r="2.9" fill="#d83a2a"/>
<path d="M100 18.3 L102.4 20.7 M102.4 18.3 L100 20.7" stroke="#fff" stroke-width="1"/>
<path d="M109.8 0 V26 M132.6 0 V26 M156.3 0 V26 M180 0 V26 M203.5 0 V26 M246 0 V26 M307.7 0 V26 M350.4 0 V26" stroke="#d4d4d4" stroke-width="1"/>
</svg>
<svg style="position:absolute;left:348px;top:266px;" width="100" height="26" viewBox="0 0 100 26">
<path d="M6 7.3 H18.6 L20.4 9 V20.8 H6 Z" fill="#7f3fa8"/>
<rect x="8" y="9" width="10" height="6" fill="#fff"/>
<path d="M9 11 H17 M9 13 H17" stroke="#999" stroke-width="0.8"/>
<rect x="9.5" y="17" width="7.5" height="3.8" fill="#fff"/><rect x="10.3" y="17.6" width="1.8" height="3.2" fill="#7f3fa8"/>
<path d="M31 8.5 H41.5 L43.8 10.5 V21 H31 Z" fill="#7f3fa8"/>
<rect x="33.4" y="16.8" width="8" height="4.2" fill="#fff"/><rect x="34.5" y="17.5" width="1.6" height="3.5" fill="#7f3fa8"/><rect x="37.5" y="17.5" width="1.6" height="3.5" fill="#7f3fa8"/>
<rect x="29.2" y="6.2" width="9.6" height="9.6" fill="#2f6fbf"/>
<path d="M31 8.3 H37 M34 8.3 V14.5 M32.8 14.5 H35.2" stroke="#fff" stroke-width="1.4"/>
<rect x="55.5" y="6.8" width="9" height="4.2" rx="1" fill="#fff" stroke="#666" stroke-width="1"/>
<rect x="52.7" y="10.4" width="15" height="7.6" rx="1.5" fill="#666"/>
<rect x="54.5" y="10.8" width="11.4" height="3.6" fill="#3a78c4"/>
<rect x="55.5" y="15.5" width="9" height="5.3" fill="#fff" stroke="#666" stroke-width="1"/>
<path d="M57 18 H63" stroke="#9cc" stroke-width="0.6"/>
<rect x="76.5" y="11.3" width="12" height="6.8" fill="#fff" stroke="#777" stroke-width="1.1"/>
<rect x="78.6" y="13.4" width="5.8" height="2.4" fill="#2f6fbf"/>
<rect x="87" y="9" width="3" height="11.5" fill="#fff"/>
<path d="M86.4 8.4 H90.6 M88.5 8.4 V20.2 M86.4 20.2 H90.6" stroke="#666" stroke-width="1.2"/>
</svg>
<svg style="position:absolute;left:444px;top:266px;" width="100" height="26" viewBox="0 0 100 26">
<g transform="translate(2 4)">
<path d="M14.3 13.8 A4.2 4.2 0 1 0 8.2 12.3" fill="none" stroke="#2f6db5" stroke-width="2.5"/>
<path d="M2.8 6.8 V14.6 H10.2 Z" fill="#2f6db5"/>
<path d="M25.2 13.8 A4.2 4.2 0 1 1 31.3 12.3" fill="none" stroke="#2f6db5" stroke-width="2.5"/>
<path d="M36.7 6.8 V14.6 H29.3 Z" fill="#2f6db5"/>
</g>
<path d="M50.3 7 L56.4 17 M58.6 7 L52.4 17" stroke="#5d5d5d" stroke-width="1.5"/>
<circle cx="52.2" cy="18.7" r="2.1" fill="none" stroke="#2f6db5" stroke-width="1.3"/>
<circle cx="56.6" cy="18.7" r="2.1" fill="none" stroke="#2f6db5" stroke-width="1.3"/>
<path d="M66.2 7.4 H71.5 L73.5 9.5 V17.6 H66.2 Z" fill="#fff" stroke="#aaa" stroke-width="0.8"/>
<path d="M67.8 10.3 H70 M67.8 13 H70 M67.8 15.5 H69" stroke="#5e8cc8" stroke-width="0.9"/>
<path d="M71 11.6 H76.5 L78.8 13.8 V21 H71 Z" fill="#fff" stroke="#aaa" stroke-width="0.8"/>
<path d="M72.5 15 H77 M72.5 17 H77 M72.5 19 H77" stroke="#5e8cc8" stroke-width="0.9"/>
<path d="M72.4 20.8 H78" stroke="#666" stroke-width="0.9"/>
<rect x="85" y="7.8" width="11" height="11.6" rx="1" fill="#eaaa50"/>
<path d="M88 7.8 V6.5 H93 V7.8" fill="#777"/><rect x="88" y="7" width="5" height="1.8" fill="#777"/>
<path d="M90.5 12.8 H95.5 L98.2 15.3 V21 H90.5 Z" fill="#fff" stroke="#aaa" stroke-width="0.8"/>
<path d="M92 15.8 H94 M92 18 H96.5" stroke="#5e8cc8" stroke-width="0.9"/>
<path d="M91.5 20.6 H97.5" stroke="#666" stroke-width="0.9"/>
</svg>
<svg style="position:absolute;left:540px;top:266px;" width="160" height="30" viewBox="0 0 160 30">
<g fill="#4a4a4a">
<rect x="14" y="6.2" width="4.6" height="3"/><rect x="20.5" y="6.2" width="4.6" height="3"/>
<rect x="13" y="9" width="6" height="6"/><rect x="20" y="9" width="6" height="6"/>
<rect x="12.7" y="14.5" width="6.4" height="6.8"/><rect x="20" y="14.5" width="6.4" height="6.8"/>
<rect x="18.6" y="10.5" width="1.8" height="5"/>
</g>
<path d="M14.3 15.5 V20.5 M16.8 15.5 V20.5 M21.7 15.5 V20.5 M24.3 15.5 V20.5" stroke="#aaa" stroke-width="0.7"/>
<text x="31" y="13.5" font-family="Liberation Sans, sans-serif" font-size="7" fill="#5e7fae" letter-spacing="-0.4">AB</text>
<text x="38" y="20.8" font-family="Liberation Sans, sans-serif" font-size="7" fill="#2f6db5" letter-spacing="-0.4">AC</text>
<path d="M32.2 15.2 L35 18.5 H38 M36.3 17 L38 18.5 L36.3 20" fill="none" stroke="#2f6db5" stroke-width="1"/>
<path d="M128.5 12.2 L132.5 16.2 L136.5 12.2" fill="none" stroke="#222" stroke-width="1.2"/>
<rect x="148" y="25" width="4.5" height="1" fill="#666"/>
</svg>
<svg style="position:absolute;left:875px;top:307px;" width="20" height="20" viewBox="0 0 20 20"><path d="M12.35 7.32 A4 4 0 1 0 13.91 11.64" fill="none" stroke="#fff" stroke-width="1.9"/><path d="M15.2 5.7 V9.8 H11.1 Z" fill="#fff"/></svg>
<svg style="position:absolute;left:1157px;top:351px;" width="20" height="20" viewBox="0 0 20 20"><path d="M12.35 7.32 A4 4 0 1 0 13.91 11.64" fill="none" stroke="#fff" stroke-width="1.9"/><path d="M15.2 5.7 V9.8 H11.1 Z" fill="#fff"/></svg>
<div class="t" style="left:491.00px;top:10.63px;font-family:'Liberation Sans', sans-serif;font-size:13.2px;line-height:13.2px;font-weight:400;color:#141414;transform:scaleX(0.9919);-webkit-text-stroke:0.55px #141414;">AmigoPOS Back Office 9.2.44</div>
<div class="t" style="left:12.00px;top:35.11px;font-family:'Liberation Sans', sans-serif;font-size:10.5px;line-height:10.5px;font-weight:700;color:#fff;transform:scaleX(0.9498);">START</div>
<div class="t" style="left:74.50px;top:32.12px;font-family:'Liberation Sans', sans-serif;font-size:12.5px;line-height:12.5px;font-weight:400;color:#2a2a2a;transform:scaleX(0.8560);">SUMMARY</div>
<div class="t" style="left:158.70px;top:32.12px;font-family:'Liberation Sans', sans-serif;font-size:12.5px;line-height:12.5px;font-weight:400;color:#2a2a2a;transform:scaleX(0.7408);">REPORTS</div>
<div class="t" style="left:233.70px;top:32.12px;font-family:'Liberation Sans', sans-serif;font-size:12.5px;line-height:12.5px;font-weight:400;color:#2a2a2a;transform:scaleX(0.8503);">MENU</div>
<div class="t" style="left:294.50px;top:32.12px;font-family:'Liberation Sans', sans-serif;font-size:12.5px;line-height:12.5px;font-weight:400;color:#2a2a2a;transform:scaleX(0.7780);">EMPLOYEES</div>
<div class="t" style="left:383.50px;top:32.12px;font-family:'Liberation Sans', sans-serif;font-size:12.5px;line-height:12.5px;font-weight:400;color:#2a2a2a;transform:scaleX(0.7848);">CUSTOMERS</div>
<div class="t" style="left:476.00px;top:32.12px;font-family:'Liberation Sans', sans-serif;font-size:12.5px;line-height:12.5px;font-weight:400;color:#2a2a2a;transform:scaleX(0.8140);">INVENTORY</div>
<div class="t" style="left:643.00px;top:32.12px;font-family:'Liberation Sans', sans-serif;font-size:12.5px;line-height:12.5px;font-weight:400;color:#2a2a2a;transform:scaleX(0.7656);">HELP</div>
<div class="t" style="left:565.00px;top:32.12px;font-family:'Liberation Sans', sans-serif;font-size:12.5px;line-height:12.5px;font-weight:400;color:#2b5a96;transform:scaleX(0.7838);">SETTINGS</div>
<div class="t" style="left:19.40px;top:92.11px;font-family:'Liberation Sans', sans-serif;font-size:10.5px;line-height:10.5px;font-weight:400;color:#1c1c1c;transform:scaleX(1.0147);">Main</div>
<div class="t" style="left:8.00px;top:105.31px;font-family:'Liberation Sans', sans-serif;font-size:10.5px;line-height:10.5px;font-weight:400;color:#1c1c1c;transform:scaleX(1.0144);">Settings</div>
<div class="t" style="left:60.20px;top:92.11px;font-family:'Liberation Sans', sans-serif;font-size:10.5px;line-height:10.5px;font-weight:400;color:#1c1c1c;transform:scaleX(1.0280);">Credit</div>
<div class="t" style="left:60.00px;top:105.31px;font-family:'Liberation Sans', sans-serif;font-size:10.5px;line-height:10.5px;font-weight:400;color:#1c1c1c;transform:scaleX(0.9423);">Cards</div>
<div class="t" style="left:104.00px;top:92.11px;font-family:'Liberation Sans', sans-serif;font-size:10.5px;line-height:10.5px;font-weight:400;color:#1c1c1c;transform:scaleX(1.0402);">Gift</div>
<div class="t" style="left:98.00px;top:105.31px;font-family:'Liberation Sans', sans-serif;font-size:10.5px;line-height:10.5px;font-weight:400;color:#1c1c1c;transform:scaleX(0.9281);">Cards</div>
<div class="t" style="left:134.30px;top:92.31px;font-family:'Liberation Sans', sans-serif;font-size:10.5px;line-height:10.5px;font-weight:400;color:#1c1c1c;transform:scaleX(0.9508);">Rewards</div>
<div class="t" style="left:187.00px;top:92.31px;font-family:'Liberation Sans', sans-serif;font-size:10.5px;line-height:10.5px;font-weight:400;color:#1c1c1c;transform:scaleX(1.0320);">Hotel</div>
<div class="t" style="left:177.70px;top:106.11px;font-family:'Liberation Sans', sans-serif;font-size:10.5px;line-height:10.5px;font-weight:400;color:#1c1c1c;transform:scaleX(1.0108);">Interface</div>
<div class="t" style="left:225.70px;top:92.31px;font-family:'Liberation Sans', sans-serif;font-size:10.5px;line-height:10.5px;font-weight:400;color:#1c1c1c;">Discounts</div>
<div class="t" style="left:277.30px;top:92.31px;font-family:'Liberation Sans', sans-serif;font-size:10.5px;line-height:10.5px;font-weight:400;color:#1c1c1c;transform:scaleX(1.0074);">Combos</div>
<div class="t" style="left:325.30px;top:92.31px;font-family:'Liberation Sans', sans-serif;font-size:10.5px;line-height:10.5px;font-weight:400;color:#1c1c1c;transform:scaleX(0.9680);">Event</div>
<div class="t" style="left:320.70px;top:105.61px;font-family:'Liberation Sans', sans-serif;font-size:10.5px;line-height:10.5px;font-weight:400;color:#1c1c1c;transform:scaleX(1.0153);">Pricing</div>
<div class="t" style="left:360.00px;top:92.31px;font-family:'Liberation Sans', sans-serif;font-size:10.5px;line-height:10.5px;font-weight:400;color:#1c1c1c;transform:scaleX(0.9857);">Translations</div>
<div class="t" style="left:171.00px;top:125.81px;font-family:'Liberation Sans', sans-serif;font-size:10.5px;line-height:10.5px;font-weight:400;color:#1c1c1c;transform:scaleX(1.0483);">General Settings</div>
<div class="t" style="left:429.70px;top:92.81px;font-family:'Liberation Sans', sans-serif;font-size:10.5px;line-height:10.5px;font-weight:400;color:#1c1c1c;transform:scaleX(1.0226);">All Program</div>
<div class="t" style="left:437.00px;top:106.11px;font-family:'Liberation Sans', sans-serif;font-size:10.5px;line-height:10.5px;font-weight:400;color:#1c1c1c;transform:scaleX(1.0091);">Settings</div>
<div class="t" style="left:499.70px;top:97.81px;font-family:'Liberation Sans', sans-serif;font-size:10.5px;line-height:10.5px;font-weight:400;color:#1c1c1c;transform:scaleX(0.9529);">Devices</div>
<div class="t" style="left:556.70px;top:97.81px;font-family:'Liberation Sans', sans-serif;font-size:10.5px;line-height:10.5px;font-weight:400;color:#1c1c1c;transform:scaleX(0.9829);">Receipt</div>
<div class="t" style="left:549.00px;top:110.31px;font-family:'Liberation Sans', sans-serif;font-size:10.5px;line-height:10.5px;font-weight:400;color:#1c1c1c;transform:scaleX(0.9967);">Templates</div>
<div class="t" style="left:11.40px;top:200.84px;font-family:'Liberation Sans', sans-serif;font-size:12px;line-height:12px;font-weight:400;color:#141414;transform:scaleX(0.9076);">Receipt Templates</div>
<div class="t" style="left:16.20px;top:231.31px;font-family:'Liberation Sans', sans-serif;font-size:11.8px;line-height:11.8px;font-weight:400;color:#fff;transform:scaleX(0.9221);">Receipt Templates</div>
<div class="t" style="left:35.60px;top:268.36px;font-family:'Liberation Sans', sans-serif;font-size:9.5px;line-height:9.5px;font-weight:400;color:#6d6d6d;transform:scaleX(0.8498);">Template:</div>
<div class="t" style="left:35.60px;top:279.00px;font-family:'Liberation Sans', sans-serif;font-size:13px;line-height:13px;font-weight:400;color:#141414;transform:scaleX(0.8551);">Default Receipt Template</div>
<div class="t" style="left:264.30px;top:275.44px;font-family:'Liberation Sans', sans-serif;font-size:12px;line-height:12px;font-weight:400;color:#141414;transform:scaleX(0.9282);">Default</div>
<div class="t" style="left:597.70px;top:274.44px;font-family:'Liberation Sans', sans-serif;font-size:12px;line-height:12px;font-weight:400;color:#141414;transform:scaleX(0.8816);">Font Size</div>
<div class="t" style="left:653.20px;top:274.44px;font-family:'Liberation Sans', sans-serif;font-size:12px;line-height:12px;font-weight:400;color:#141414;transform:scaleX(0.7860);">13</div>
<div class="t" style="left:27.00px;top:302.42px;font-family:'Liberation Sans', sans-serif;font-size:12.5px;line-height:12.5px;font-weight:400;color:#141414;transform:scaleX(0.8680);">Receipt Tokens</div>
<div class="t" style="left:114.00px;top:302.42px;font-family:'Liberation Sans', sans-serif;font-size:12.5px;line-height:12.5px;font-weight:400;color:#7a7a7a;transform:scaleX(0.8969);">Validation Toke</div>
<div class="t" style="left:30.30px;top:336.19px;font-family:'Liberation Mono', monospace;font-size:11.5px;line-height:11.5px;font-weight:700;color:#1f4a85;transform:scaleX(0.8983);">Date Time Started</div>
<div class="t" style="left:30.30px;top:371.19px;font-family:'Liberation Mono', monospace;font-size:11.5px;line-height:11.5px;font-weight:700;color:#1f4a85;transform:scaleX(0.8983);">Delivery Charge</div>
<div class="t" style="left:30.30px;top:406.19px;font-family:'Liberation Mono', monospace;font-size:11.5px;line-height:11.5px;font-weight:700;color:#1f4a85;transform:scaleX(0.8984);">Discount Details</div>
<div class="t" style="left:30.30px;top:441.19px;font-family:'Liberation Mono', monospace;font-size:11.5px;line-height:11.5px;font-weight:700;color:#1f4a85;transform:scaleX(0.8982);">Discounts</div>
<div class="t" style="left:30.30px;top:476.19px;font-family:'Liberation Mono', monospace;font-size:11.5px;line-height:11.5px;font-weight:700;color:#1f4a85;transform:scaleX(0.8984);">Foreign Currency</div>
<div class="t" style="left:30.30px;top:511.19px;font-family:'Liberation Mono', monospace;font-size:11.5px;line-height:11.5px;font-weight:700;color:#1f4a85;transform:scaleX(0.8982);">Gratuity</div>
<div class="t" style="left:30.30px;top:546.19px;font-family:'Liberation Mono', monospace;font-size:11.5px;line-height:11.5px;font-weight:700;color:#1f4a85;transform:scaleX(0.8981);">Guests</div>
<div class="t" style="left:30.30px;top:581.19px;font-family:'Liberation Mono', monospace;font-size:11.5px;line-height:11.5px;font-weight:700;color:#1f4a85;transform:scaleX(0.8981);">Image</div>
<div class="t" style="left:30.30px;top:616.19px;font-family:'Liberation Mono', monospace;font-size:11.5px;line-height:11.5px;font-weight:700;color:#1f4a85;transform:scaleX(0.8982);">Line</div>
<div class="t" style="left:30.30px;top:651.19px;font-family:'Liberation Mono', monospace;font-size:11.5px;line-height:11.5px;font-weight:700;color:#1f4a85;transform:scaleX(0.8983);">Mandatory Gratuity</div>
<div class="t" style="left:216.70px;top:302.72px;font-family:'Liberation Sans', sans-serif;font-size:12.5px;line-height:12.5px;font-weight:400;color:#141414;transform:scaleX(0.8870);">Template</div>
<div class="t" style="left:274.00px;top:302.72px;font-family:'Liberation Sans', sans-serif;font-size:12.5px;line-height:12.5px;font-weight:400;color:#6a6a6a;transform:scaleX(0.8985);">Order Items</div>
<div class="t" style="left:346.70px;top:302.72px;font-family:'Liberation Sans', sans-serif;font-size:12.5px;line-height:12.5px;font-weight:400;color:#6a6a6a;transform:scaleX(0.8382);">Payments</div>
<div class="t" style="left:406.70px;top:302.72px;font-family:'Liberation Sans', sans-serif;font-size:12.5px;line-height:12.5px;font-weight:400;color:#6a6a6a;transform:scaleX(0.8923);">Discount Details</div>
<div class="t" style="left:681.70px;top:662.19px;font-family:'Liberation Sans', sans-serif;font-size:11px;line-height:11px;font-weight:400;color:#1e1e1e;transform:scaleX(0.8173);">Ln 47</div>
<div class="t" style="left:720.00px;top:662.19px;font-family:'Liberation Sans', sans-serif;font-size:11px;line-height:11px;font-weight:400;color:#1e1e1e;transform:scaleX(0.8240);">Col 73</div>
<div class="t" style="left:762.80px;top:662.19px;font-family:'Liberation Sans', sans-serif;font-size:11px;line-height:11px;font-weight:400;color:#1e1e1e;transform:scaleX(0.8310);">WINDOWS-1253</div>
<div class="t" style="left:228.10px;top:325.31px;font-family:'Liberation Mono', monospace;font-size:12px;line-height:12px;font-weight:400;color:#34340c;transform:scaleX(0.8607);">26</div>
<div class="t" style="left:228.10px;top:338.51px;font-family:'Liberation Mono', monospace;font-size:12px;line-height:12px;font-weight:400;color:#34340c;transform:scaleX(0.8607);">27</div>
<div class="t" style="left:228.10px;top:351.71px;font-family:'Liberation Mono', monospace;font-size:12px;line-height:12px;font-weight:400;color:#34340c;transform:scaleX(0.8607);">28</div>
<div class="t" style="left:228.10px;top:364.91px;font-family:'Liberation Mono', monospace;font-size:12px;line-height:12px;font-weight:400;color:#34340c;transform:scaleX(0.8607);">29</div>
<div class="t" style="left:228.10px;top:378.11px;font-family:'Liberation Mono', monospace;font-size:12px;line-height:12px;font-weight:400;color:#34340c;transform:scaleX(0.8607);">30</div>
<div class="t" style="left:228.10px;top:391.31px;font-family:'Liberation Mono', monospace;font-size:12px;line-height:12px;font-weight:400;color:#34340c;transform:scaleX(0.8607);">31</div>
<div class="t" style="left:228.10px;top:404.51px;font-family:'Liberation Mono', monospace;font-size:12px;line-height:12px;font-weight:400;color:#34340c;transform:scaleX(0.8607);">32</div>
<div class="t" style="left:228.10px;top:417.71px;font-family:'Liberation Mono', monospace;font-size:12px;line-height:12px;font-weight:400;color:#34340c;transform:scaleX(0.8607);">33</div>
<div class="t" style="left:228.10px;top:430.91px;font-family:'Liberation Mono', monospace;font-size:12px;line-height:12px;font-weight:400;color:#34340c;transform:scaleX(0.8607);">34</div>
<div class="t" style="left:228.10px;top:444.11px;font-family:'Liberation Mono', monospace;font-size:12px;line-height:12px;font-weight:400;color:#34340c;transform:scaleX(0.8607);">35</div>
<div class="t" style="left:228.10px;top:457.31px;font-family:'Liberation Mono', monospace;font-size:12px;line-height:12px;font-weight:400;color:#34340c;transform:scaleX(0.8607);">36</div>
<div class="t" style="left:228.10px;top:470.51px;font-family:'Liberation Mono', monospace;font-size:12px;line-height:12px;font-weight:400;color:#34340c;transform:scaleX(0.8607);">37</div>
<div class="t" style="left:228.10px;top:483.71px;font-family:'Liberation Mono', monospace;font-size:12px;line-height:12px;font-weight:400;color:#34340c;transform:scaleX(0.8607);">38</div>
<div class="t" style="left:228.10px;top:496.91px;font-family:'Liberation Mono', monospace;font-size:12px;line-height:12px;font-weight:400;color:#34340c;transform:scaleX(0.8607);">39</div>
<div class="t" style="left:228.10px;top:510.11px;font-family:'Liberation Mono', monospace;font-size:12px;line-height:12px;font-weight:400;color:#34340c;transform:scaleX(0.8607);">40</div>
<div class="t" style="left:228.10px;top:523.31px;font-family:'Liberation Mono', monospace;font-size:12px;line-height:12px;font-weight:400;color:#34340c;transform:scaleX(0.8607);">41</div>
<div class="t" style="left:228.10px;top:536.51px;font-family:'Liberation Mono', monospace;font-size:12px;line-height:12px;font-weight:400;color:#34340c;transform:scaleX(0.8607);">42</div>
<div class="t" style="left:228.10px;top:549.71px;font-family:'Liberation Mono', monospace;font-size:12px;line-height:12px;font-weight:400;color:#34340c;transform:scaleX(0.8607);">43</div>
<div class="t" style="left:228.10px;top:562.91px;font-family:'Liberation Mono', monospace;font-size:12px;line-height:12px;font-weight:400;color:#34340c;transform:scaleX(0.8607);">44</div>
<div class="t" style="left:228.10px;top:576.11px;font-family:'Liberation Mono', monospace;font-size:12px;line-height:12px;font-weight:400;color:#34340c;transform:scaleX(0.8607);">45</div>
<div class="t" style="left:228.10px;top:589.31px;font-family:'Liberation Mono', monospace;font-size:12px;line-height:12px;font-weight:400;color:#34340c;transform:scaleX(0.8607);">46</div>
<div class="t" style="left:228.10px;top:602.51px;font-family:'Liberation Mono', monospace;font-size:12px;line-height:12px;font-weight:400;color:#34340c;transform:scaleX(0.8607);">47</div>
<div class="t" style="left:228.10px;top:615.71px;font-family:'Liberation Mono', monospace;font-size:12px;line-height:12px;font-weight:400;color:#34340c;transform:scaleX(0.8607);">48</div>
<div class="t" style="left:228.10px;top:628.91px;font-family:'Liberation Mono', monospace;font-size:12px;line-height:12px;font-weight:400;color:#34340c;transform:scaleX(0.8607);">49</div>
<div class="t" style="left:228.10px;top:642.11px;font-family:'Liberation Mono', monospace;font-size:12px;line-height:12px;font-weight:400;color:#34340c;transform:scaleX(0.8607);">50</div>
<div class="t" style="left:915.00px;top:305.89px;font-family:'Liberation Sans', sans-serif;font-size:11px;line-height:11px;font-weight:400;color:#fff;transform:scaleX(0.9000);">Receipt Printer: EPSON TM-</div>
<div class="t" style="left:951.40px;top:319.89px;font-family:'Liberation Sans', sans-serif;font-size:11px;line-height:11px;font-weight:400;color:#fff;transform:scaleX(0.9037);">T20 Receipt</div>
<div class="t" style="left:1086.30px;top:313.19px;font-family:'Liberation Sans', sans-serif;font-size:11px;line-height:11px;font-weight:400;color:#fff;transform:scaleX(0.9193);">Print Receipt</div>
<div class="t" style="left:866.50px;top:357.09px;font-family:'Liberation Sans', sans-serif;font-size:12.3px;line-height:12.3px;font-weight:400;color:#151515;transform:scaleX(0.9409);-webkit-text-stroke:0.5px #151515;">Select the order:</div>
<div class="t" style="left:965.20px;top:356.22px;font-family:'Liberation Sans', sans-serif;font-size:12.5px;line-height:12.5px;font-weight:400;color:#141414;transform:scaleX(0.8834);">#31 DINE-IN</div>
<div class="t" style="left:972.70px;top:425.35px;font-family:'Liberation Mono', monospace;font-size:12.6px;line-height:12.6px;font-weight:400;color:#333;transform:scaleX(0.9526);">Order No 31</div>
<div class="t" style="left:890.40px;top:458.57px;font-family:'Liberation Mono', monospace;font-size:11px;line-height:11px;font-weight:400;color:#111;transform:scaleX(0.8649);">Gratuity suggestions</div>
<div class="t" style="left:1064.41px;top:458.57px;font-family:'Liberation Mono', monospace;font-size:11px;line-height:11px;font-weight:400;color:#111;transform:scaleX(0.8648);">25% $3.16</div>
<div class="t" style="left:890.40px;top:474.27px;font-family:'Liberation Mono', monospace;font-size:11px;line-height:11px;font-weight:400;color:#111;transform:scaleX(0.8649);">based on order total</div>
<div class="t" style="left:1064.41px;top:474.27px;font-family:'Liberation Mono', monospace;font-size:11px;line-height:11px;font-weight:400;color:#111;transform:scaleX(0.8648);">20% $2.53</div>
<div class="t" style="left:890.40px;top:489.87px;font-family:'Liberation Mono', monospace;font-size:11px;line-height:11px;font-weight:400;color:#111;transform:scaleX(0.8649);">less discounts</div>
<div class="t" style="left:1064.41px;top:489.87px;font-family:'Liberation Mono', monospace;font-size:11px;line-height:11px;font-weight:400;color:#111;transform:scaleX(0.8648);">15% $1.90</div>
<div class="t" style="left:954.60px;top:548.05px;font-family:'Liberation Mono', monospace;font-size:12.6px;line-height:12.6px;font-weight:400;color:#333;transform:scaleX(0.9543);">Foreign Exchange</div>
<div class="t" style="left:890.00px;top:572.74px;font-family:'Liberation Mono', monospace;font-size:13px;line-height:13px;font-weight:700;color:#222;transform:scaleX(0.9740);">Pound</div>
<div class="t" style="left:1038.00px;top:572.74px;font-family:'Liberation Mono', monospace;font-size:13px;line-height:13px;font-weight:700;color:#222;transform:scaleX(0.9870);"> 12.65 GBP</div>
<div class="t" style="left:1029.60px;top:572.74px;font-family:'Liberation Mono', monospace;font-size:13px;line-height:13px;font-weight:700;color:#222;transform:scaleX(0.9728);">£</div>
<div class="t" style="left:890.00px;top:591.34px;font-family:'Liberation Mono', monospace;font-size:13px;line-height:13px;font-weight:700;color:#222;transform:scaleX(0.9738);">Baht</div>
<div class="t" style="left:1038.00px;top:591.34px;font-family:'Liberation Mono', monospace;font-size:13px;line-height:13px;font-weight:700;color:#222;transform:scaleX(0.9870);"> 12.65 BHT</div>
<div class="t" style="left:1029.60px;top:591.34px;font-family:'Liberation Mono', monospace;font-size:13px;line-height:13px;font-weight:700;color:#222;transform:scaleX(0.9709);">฿</div>
<div class="t" style="left:890.00px;top:609.04px;font-family:'Liberation Mono', monospace;font-size:13px;line-height:13px;font-weight:700;color:#222;transform:scaleX(0.9741);">Yen</div>
<div class="t" style="left:1038.00px;top:609.04px;font-family:'Liberation Mono', monospace;font-size:13px;line-height:13px;font-weight:700;color:#222;transform:scaleX(0.9870);"> 12.65 YEN</div>
<div class="t" style="left:1023.80px;top:608.80px;font-family:'Liberation Sans', sans-serif;font-size:13px;line-height:13px;font-weight:400;color:#333;transform:scaleX(0.9231);">円</div>
<div class="t" style="left:10.90px;top:706.07px;font-family:'Liberation Sans', sans-serif;font-size:11.5px;line-height:11.5px;font-weight:400;color:#2d5a98;transform:scaleX(0.8998);text-decoration:underline;">ROY BATTY</div>
<div style="position:absolute;left:0;top:0;width:1200px;height:726px;box-sizing:border-box;border:1px solid #c8c8c8;border-bottom-width:2px;"></div>
<svg style="position:absolute;left:0;top:0;overflow:visible" width="1200" height="726">
<defs><filter id="sh" x="-20%" y="-30%" width="150%" height="170%"><feGaussianBlur in="SourceAlpha" stdDeviation="2"/><feOffset dx="2" dy="3"/><feComponentTransfer><feFuncA type="linear" slope="0.55"/></feComponentTransfer><feMerge><feMergeNode/><feMergeNode in="SourceGraphic"/></feMerge></filter></defs>
<g filter="url(#sh)" fill="#fd4346">
<path d="M160 479 L188 464.5 L188 474 L256 473 A4.5 4.5 0 0 1 256 482 L188 483.5 L188 493.5 Z"/>
<path d="M238 619 L210.5 605.5 L210.5 614.8 L180 615 A4.5 4.5 0 0 0 180 624 L210.5 623.6 L210.5 633 Z"/>
<path d="M239 640 L211.5 626 L211.5 637.5 L178.5 638.5 A4.5 4.5 0 0 0 178.5 647.5 L211.5 646.5 L211.5 655 Z"/>
</g></svg>
</body></html>
